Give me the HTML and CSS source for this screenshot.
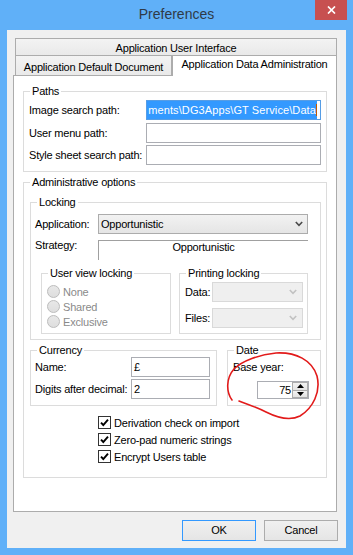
FILE: index.html
```html
<!DOCTYPE html>
<html>
<head>
<meta charset="utf-8">
<title>Preferences</title>
<link rel="stylesheet" href="styles.css">
</head>
<body>
<div class="window">
  <div class="titlebar">
    <span class="title">Preferences</span>
    <div class="close"><svg width="9" height="8" viewBox="0 0 9 8"><path d="M1 0.5L8 7.5M8 0.5L1 7.5" stroke="#fff" stroke-width="1.7"/></svg></div>
  </div>
  <div class="client">
    <div class="tabs">
      <div class="tab-top">Application User Interface</div>
      <div class="tab-row">
        <div class="tab">Application Default Document</div>
        <div class="tab active">Application Data Administration</div>
      </div>
      <div class="panel">
        <fieldset class="group paths">
          <legend>Paths</legend>
          <div class="paths-body">
            <div class="row"><span class="lbl w117">Image search path:</span><div class="edit path focused"><span class="sel">ments\DG3Apps\GT Service\Data</span><span class="caret"></span></div></div>
            <div class="row r2"><span class="lbl w117">User menu path:</span><div class="edit path"></div></div>
            <div class="row r3"><span class="lbl w117">Style sheet search path:</span><div class="edit path"></div></div>
          </div>
        </fieldset>

        <fieldset class="group admin">
          <legend>Administrative options</legend>
          <div class="admin-body">
            <fieldset class="group locking">
              <legend>Locking</legend>
              <div class="locking-body">
                <div class="row"><span class="lbl w63">Application:</span>
                  <div class="select"><span>Opportunistic</span><svg class="chev" width="8" height="6" viewBox="0 0 8 6"><path d="M0.8 1L4 4.3L7.2 1" fill="none" stroke="#4a4a4a" stroke-width="1.6"/></svg></div>
                </div>
                <div class="strategy-row"><span class="lbl w63 strat-lbl">Strategy:</span><div class="static">Opportunistic</div></div>
                <div class="subgroups">
                  <fieldset class="group uv">
                    <legend>User view locking</legend>
                    <div class="uv-body">
                      <div class="radio-row"><span class="radio"></span><span class="disabled-text">None</span></div>
                      <div class="radio-row"><span class="radio"></span><span class="disabled-text">Shared</span></div>
                      <div class="radio-row"><span class="radio"></span><span class="disabled-text">Exclusive</span></div>
                    </div>
                  </fieldset>
                  <fieldset class="group pl">
                    <legend>Printing locking</legend>
                    <div class="pl-body">
                      <div class="row"><span class="lbl w27">Data:</span><div class="combo-dis"><svg width="8" height="6" viewBox="0 0 8 6"><path d="M0.8 1L4 4.3L7.2 1" fill="none" stroke="#c2c2c2" stroke-width="1.6"/></svg></div></div>
                      <div class="row r-files"><span class="lbl w27">Files:</span><div class="combo-dis"><svg width="8" height="6" viewBox="0 0 8 6"><path d="M0.8 1L4 4.3L7.2 1" fill="none" stroke="#c2c2c2" stroke-width="1.6"/></svg></div></div>
                    </div>
                  </fieldset>
                </div>
              </div>
            </fieldset>

            <div class="cd-row">
              <fieldset class="group currency">
                <legend>Currency</legend>
                <div class="currency-body">
                  <div class="row"><span class="lbl w96">Name:</span><div class="edit small">£</div></div>
                  <div class="row r-digits"><span class="lbl w96">Digits after decimal:</span><div class="edit small">2</div></div>
                </div>
              </fieldset>
              <fieldset class="group date">
                <legend>Date</legend>
                <div class="date-body">
                  <div class="base-lbl">Base year:</div>
                  <div class="spinner">
                    <span class="spin-val">75</span>
                    <div class="spin-btns">
                      <div class="spin-btn"><svg width="7" height="4" viewBox="0 0 7 4"><path d="M0 4L3.5 0L7 4Z" fill="#000"/></svg></div>
                      <div class="spin-btn"><svg width="7" height="4" viewBox="0 0 7 4"><path d="M0 0L3.5 4L7 0Z" fill="#000"/></svg></div>
                    </div>
                  </div>
                </div>
              </fieldset>
            </div>

            <div class="checks">
              <div class="check-row"><span class="checkbox"><svg width="11" height="11" viewBox="0 0 11 11"><path d="M2 5.6L4.3 8L9 2.6" fill="none" stroke="#000" stroke-width="1.9"/></svg></span><span>Derivation check on import</span></div>
              <div class="check-row"><span class="checkbox"><svg width="11" height="11" viewBox="0 0 11 11"><path d="M2 5.6L4.3 8L9 2.6" fill="none" stroke="#000" stroke-width="1.9"/></svg></span><span>Zero-pad numeric strings</span></div>
              <div class="check-row"><span class="checkbox"><svg width="11" height="11" viewBox="0 0 11 11"><path d="M2 5.6L4.3 8L9 2.6" fill="none" stroke="#000" stroke-width="1.9"/></svg></span><span>Encrypt Users table</span></div>
            </div>
          </div>
        </fieldset>
      </div>
    </div>
    <div class="buttons">
      <button class="btn default">OK</button>
      <button class="btn">Cancel</button>
    </div>
  </div>
  <svg class="annotation" width="353" height="555" viewBox="0 0 353 555">
    <path d="M232,400 C226,392 226,378 234,369 C242,361 258,355 276,353 C296,352 312,360 317,376 C321,392 313,408 300,416 C290,421 278,418 266,412 C256,407 247,404 239,401" fill="none" stroke="#e21a1a" stroke-width="1.6" stroke-linecap="round"/>
  </svg>
</div>
</body>
</html>
```
FILE: styles.css
```css
* { box-sizing: border-box; }

body {
  margin: 0;
  font-family: "Liberation Sans", Arial, sans-serif;
  font-size: 11px;
  letter-spacing: -0.2px;
  color: #000;
}

.window {
  position: relative;
  width: 353px;
  height: 555px;
  background: #60b0f8;
  padding: 0 7px 7px;
}

.titlebar {
  position: relative;
  height: 30px;
  padding-top: 4px;
  text-align: center;
  font-size: 14px;
  line-height: 20px;
  letter-spacing: 0;
  color: #2f3a47;
}

.close {
  position: absolute;
  top: 0;
  right: -1px;
  width: 32px;
  height: 20px;
  background: #c75050;
  display: flex;
  align-items: center;
  justify-content: center;
}

.client {
  height: 518px;
  background: #f0f0f0;
  padding: 8px 7px 7px 6px;
  display: flex;
  flex-direction: column;
}

.tabs { width: 324px; }

.tab-top {
  margin-left: 2px;
  width: 322px;
  height: 17px;
  border: 1px solid #acacac;
  border-bottom: none;
  padding-top: 3px;
  line-height: 13px;
  text-align: center;
  background: linear-gradient(#f3f3f3, #e9e9e9);
}

.tab-row {
  display: flex;
  align-items: flex-start;
  margin-left: 2px;
  height: 20px;
}

.tab {
  width: 157px;
  height: 20px;
  border: 1px solid #acacac;
  border-bottom: none;
  padding-top: 5px;
  line-height: 13px;
  text-align: center;
  background: linear-gradient(#f3f3f3, #e9e9e9);
}

.tab.active {
  width: 165px;
  height: 21px;
  padding-top: 2px;
  background: #fff;
  position: relative;
  z-index: 1;
}

.panel {
  height: 437px;
  border: 1px solid #acacac;
  background: #fff;
  padding: 9px 9px 0;
}

.group {
  margin: 0;
  padding: 0;
  border: 1px solid #dcdcdc;
  min-width: 0;
}

.group > legend {
  margin-left: 6px;
  padding: 0 2px;
  line-height: 13px;
}

.row {
  display: flex;
  align-items: center;
  height: 20px;
}

.lbl { white-space: nowrap; }
.w117 { width: 117px; }
.w63 { width: 63px; }
.w27 { width: 27px; }
.w96 { width: 96px; }

.edit {
  height: 20px;
  border: 1px solid #abadb3;
  background: #fff;
  line-height: 18px;
}

.paths-body { padding: 2px 5px 6px 5px; }
.r2 { margin-top: 3px; }
.r3 { margin-top: 2px; }

.edit.path { width: 175px; }

.edit.focused {
  border-color: #569de5;
  display: flex;
  align-items: stretch;
  padding-right: 3px;
  overflow: hidden;
}

.sel {
  flex: 1;
  background: #3399ff;
  color: #fff;
  text-align: right;
  white-space: nowrap;
  overflow: hidden;
  letter-spacing: 0.1px;
  padding-right: 1px;
}

.caret {
  align-self: center;
  width: 1px;
  height: 12px;
  margin-left: -1px;
  background: #c05a00;
}

.group.admin { margin-top: 4px; }
.admin-body { padding: 7px 5px 12px 6px; }

.locking-body { padding: 5px 12px 5px 4px; }

.select {
  width: 210px;
  height: 20px;
  border: 1px solid #acacac;
  background: linear-gradient(#f2f2f2, #e5e5e5);
  padding: 0 4px 0 2px;
  display: flex;
  align-items: center;
  justify-content: space-between;
}

.strategy-row {
  display: flex;
  margin-top: 6px;
  height: 20px;
}

.strat-lbl {
  line-height: 13px;
  margin-top: -1px;
}

.static {
  width: 210px;
  height: 20px;
  border-top: 1px solid #a0a0a0;
  border-left: 1px solid #a0a0a0;
  text-align: center;
  line-height: 13px;
}

.subgroups {
  display: flex;
  gap: 8px;
  margin-top: 7px;
  padding-left: 6px;
}

.group.uv { width: 130px; }
.group.pl { width: 129px; }

.uv-body { padding: 4px 0 4px 5px; }

.radio-row {
  display: flex;
  align-items: center;
  height: 15px;
}

.radio {
  width: 13px;
  height: 13px;
  border-radius: 50%;
  border: 1px solid #bcbcbc;
  background: linear-gradient(#e8e8e8, #dedede);
  margin-right: 3px;
}

.disabled-text { color: #8a8a8a; }

.pl-body { padding: 2px 4px 5px 5px; }
.r-files { margin-top: 6px; }

.combo-dis {
  width: 91px;
  height: 20px;
  border: 1px solid #d9d9d9;
  background: #efefef;
  display: flex;
  align-items: center;
  justify-content: flex-end;
  padding-right: 5px;
}

.cd-row {
  display: flex;
  gap: 10px;
  margin-top: 4px;
}

.group.currency { width: 187px; }
.group.date { width: 94px; }

.currency-body { padding: 0 6px 6px 4px; }
.r-digits { margin-top: 2px; }

.edit.small {
  width: 79px;
  padding-left: 2px;
}

.date-body {
  padding: 4px 11px 6px 5px;
  display: flex;
  flex-direction: column;
}

.base-lbl { line-height: 13px; }

.spinner {
  align-self: flex-end;
  margin-top: 7px;
  width: 52px;
  height: 18px;
  border: 1px solid #abadb3;
  background: #fff;
  display: flex;
}

.spin-val {
  flex: 1;
  text-align: right;
  line-height: 16px;
  padding-right: 1px;
}

.spin-btns {
  width: 16px;
  display: flex;
  flex-direction: column;
}

.spin-btn {
  flex: 1;
  border: 1px solid #acacac;
  background: linear-gradient(#f2f2f2, #e3e3e3);
  display: flex;
  align-items: center;
  justify-content: center;
}

.spin-btn + .spin-btn { border-top: none; }

.checks {
  margin-top: 8px;
  padding-left: 68px;
}

.check-row {
  display: flex;
  align-items: center;
  height: 17px;
}

.checkbox {
  width: 13px;
  height: 13px;
  border: 1px solid #333;
  background: #fff;
  margin-right: 3px;
  display: flex;
  align-items: center;
  justify-content: center;
}

.buttons {
  display: flex;
  justify-content: flex-end;
  gap: 8px;
  margin-top: 8px;
  padding-right: 1px;
}

.btn {
  width: 74px;
  height: 21px;
  margin: 0;
  padding: 0;
  border: 1px solid #acacac;
  background: linear-gradient(#f0f0f0, #e5e5e5);
  font-family: "Liberation Sans", Arial, sans-serif;
  font-size: 11px;
  letter-spacing: -0.2px;
  line-height: 19px;
  color: #000;
}

.btn.default { border-color: #3399ff; }

.annotation {
  position: absolute;
  top: 0;
  left: 0;
  pointer-events: none;
}
```
